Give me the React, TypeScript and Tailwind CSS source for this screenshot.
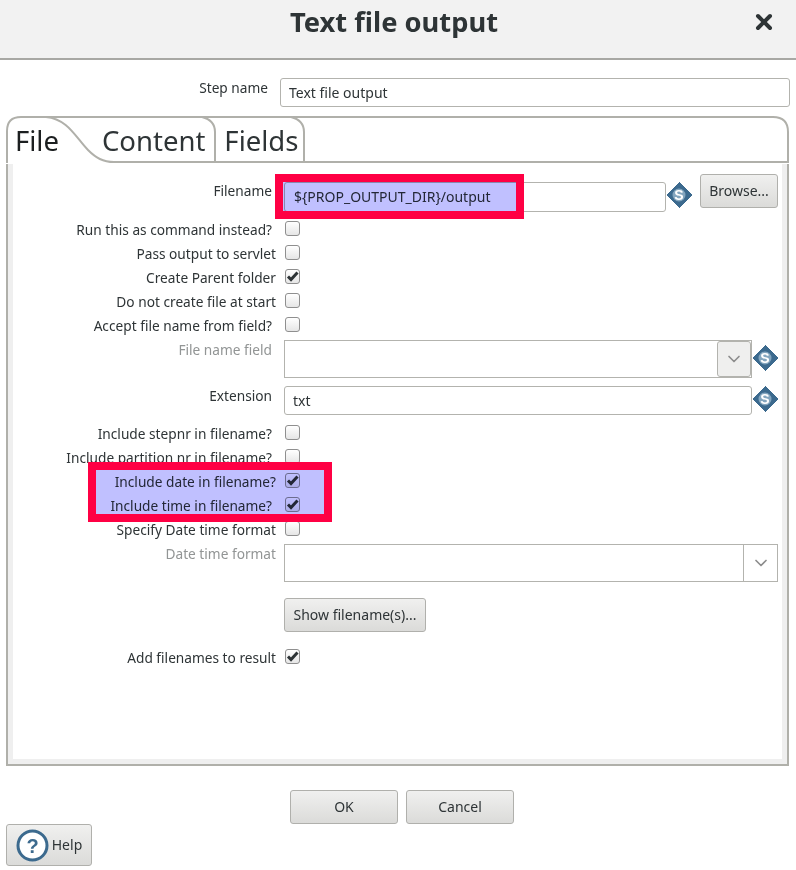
import type { ReactNode } from 'react';
import { ChevronDown, X } from 'lucide-react';

const FONT = 'font-["Noto_Sans",sans-serif]';

function VarIcon() {
  return (
    <svg width="26" height="26" viewBox="0 0 26 26" className="shrink-0">
      <path d="M13 0 L26 13 L13 26 L0 13 Z" fill="#3c6a8e" shapeRendering="crispEdges" />
      <circle cx="13" cy="13" r="6.5" fill="#84a6bf" />
      <text x="13" y="18" textAnchor="middle" fontSize="14" fontWeight="700" fill="#fff" fontFamily="Liberation Sans">
        S
      </text>
    </svg>
  );
}

function HelpIcon() {
  return (
    <svg width="33" height="33" viewBox="0 0 33 33" className="shrink-0">
      <circle cx="16.5" cy="16.5" r="14.5" fill="#fff" stroke="#3c6a8e" strokeWidth="3" />
      <text x="16.5" y="23.5" textAnchor="middle" fontSize="20" fontWeight="700" fill="#3c6a8e" fontFamily="Liberation Sans">
        ?
      </text>
    </svg>
  );
}

function Checkbox({ checked }: { checked?: boolean }) {
  return (
    <span className="ml-px flex h-[15px] w-[15px] items-center justify-center rounded-[3px] border border-[#8f8f8f] bg-gradient-to-b from-white to-[#e6e6e6]">
      {checked && (
        <svg width="13" height="13" viewBox="0 0 13 13" fill="none" stroke="#2e3436" strokeWidth="3">
          <path d="M2 6.5 L5 9.5 L11.5 2.5" />
        </svg>
      )}
    </span>
  );
}

function Label({ children, pr = 'pr-2', muted }: { children: ReactNode; pr?: string; muted?: boolean }) {
  return (
    <div className={`w-[271px] shrink-0 text-right text-[13.7px] whitespace-nowrap ${pr} ${muted ? 'text-[#929595]' : 'text-[#2e3436]'}`}>
      {children}
    </div>
  );
}

function CheckRow({ label, checked, pr }: { label: string; checked?: boolean; pr?: string }) {
  return (
    <div className="flex h-6 items-center">
      <Label pr={pr}>
        <span className="block pt-[4px]">{label}</span>
      </Label>
      <Checkbox checked={checked} />
    </div>
  );
}

function Button({ children, className }: { children: ReactNode; className: string }) {
  return (
    <button
      type="button"
      className={`flex items-center justify-center rounded-[3px] border border-[#b0b0ac] bg-gradient-to-b from-[#f0f0ef] to-[#dbdbd9] text-[#2e3436] ${className}`}
    >
      {children}
    </button>
  );
}

function Combo({ width, disabled }: { width: string; disabled?: boolean }) {
  return (
    <div className={`flex h-[38px] justify-end border border-[#b3b3ae] bg-white ${width}`}>
      <span
        className={`flex w-[34px] items-center justify-center ${
          disabled ? 'rounded-[3px] border border-[#b3b3ae] bg-[#efefee]' : 'border-l border-[#b3b3ae] bg-white'
        }`}
      >
        <ChevronDown size={20} className="text-[#8c8c8c]" />
      </span>
    </div>
  );
}

function TabOutline() {
  return (
    <svg width="783" height="48" viewBox="0 0 783 48" className="absolute top-0 left-0" fill="none" stroke="#b0b0aa" strokeWidth="2">
      <path d="M1 47 L1 15 Q1 1 15 1 L767 1 Q782 1 782 16 L782 47" />
      <path d="M40 1 C62 3 70 22 82 34 C90 42 97 46 108 46 L782 46" />
      <path d="M196 1 C204 3 209 8 209 16 L209 46" />
      <path d="M285 1 C293 3 298 8 298 16 L298 46" />
    </svg>
  );
}

export default function App() {
  return (
    <div className={`relative h-[870px] w-[796px] overflow-hidden bg-white text-[14px] leading-5 ${FONT}`}>
      {/* Title bar */}
      <div className="relative flex h-[60px] items-center justify-center border-b-2 border-[#a8a8a4] bg-[#f2f2f2] pr-[8px] pb-[14px]">
        <h1 className="text-[27.3px] font-bold text-[#2e3436]">Text file output</h1>
        <X size={24} strokeWidth={4} className="absolute top-[10px] right-[20px] text-[#2e3436]" />
      </div>

      {/* Step name */}
      <div className="mt-[18px] flex h-[29px] pr-[6px]">
        <div className="w-[268px] text-right text-[13.7px] text-[#2e3436]">Step name</div>
        <input
          readOnly
          value="Text file output"
          className="ml-3 h-[29px] flex-1 rounded-[3px] border border-[#b3b3ae] px-2 text-[#2e3436] outline-none"
        />
      </div>

      {/* Tab folder */}
      <div className="mt-[9px] ml-[6px] h-[650px] w-[783px]">
        <div className="relative h-[48px]">
          <TabOutline />
          <div className="relative flex h-[46px] items-center pt-[3px] text-[27.5px]">
            <span className="ml-[9px] text-[#1c1f20]">File</span>
            <span className="ml-[43px] text-[#2e3436]">Content</span>
            <span className="ml-[19px] text-[#2e3436]">Fields</span>
          </div>
        </div>

        <div className="h-[602px] border-x-2 border-b-2 border-[#b0b0aa] bg-[#efefef] px-[5px] pb-[5px]">
          <div className="h-full bg-white pt-[10px]">
            {/* Filename */}
            <div className="flex h-[38px]">
              <Label pr="pr-3">
                <span className="mt-[7px] block">Filename</span>
              </Label>
              <div className="mt-2 h-[30px] w-[382px] rounded-[3px] border border-[#b3b3ae] px-[9px] leading-[28px] text-[#2e3436]">
                {'${PROP_OUTPUT_DIR}/output'}
              </div>
              <div className="mt-2">
                <VarIcon />
              </div>
              <Button className="ml-[8px] h-[34px] w-[78px]">Browse...</Button>
            </div>

            <div className="mt-1">
              <CheckRow label="Run this as command instead?" pr="pr-3" />
              <CheckRow label="Pass output to servlet" />
              <CheckRow label="Create Parent folder" checked />
              <CheckRow label="Do not create file at start" />
              <CheckRow label="Accept file name from field?" pr="pr-3" />
            </div>

            {/* File name field */}
            <div className="mt-1 flex">
              <Label muted pr="pr-3">File name field</Label>
              <Combo width="w-[468px]" disabled />
              <div className="mt-[5px]">
                <VarIcon />
              </div>
            </div>

            {/* Extension */}
            <div className="mt-2 flex h-[29px]">
              <Label pr="pr-3">Extension</Label>
              <div className="h-[29px] w-[468px] rounded-[3px] border border-[#b3b3ae] px-2 leading-[27px] text-[#2e3436]">txt</div>
              <VarIcon />
            </div>

            <div className="mt-[5px]">
              <CheckRow label="Include stepnr in filename?" pr="pr-3" />
              <CheckRow label="Include partition nr in filename?" pr="pr-3" />
              <CheckRow label="Include date in filename?" checked />
              <CheckRow label="Include time in filename?" checked pr="pr-3" />
              <CheckRow label="Specify Date time format" />
            </div>

            {/* Date time format */}
            <div className="mt-1 flex">
              <Label muted>Date time format</Label>
              <Combo width="w-[494px]" />
            </div>

            <div className="mt-4 flex">
              <div className="w-[271px] shrink-0" />
              <Button className="h-[34px] w-[142px]">Show filename(s)...</Button>
            </div>

            <div className="mt-3">
              <CheckRow label="Add filenames to result" checked />
            </div>
          </div>
        </div>
      </div>

      {/* Dialog buttons */}
      <div className="mt-6 flex justify-center gap-2 pl-[8px]">
        <Button className="h-[34px] w-[108px]">OK</Button>
        <Button className="h-[34px] w-[108px]">Cancel</Button>
      </div>
      <Button className="ml-[6px] h-[42px] w-[86px] gap-[3px]">
        <HelpIcon />
        Help
      </Button>

      {/* Annotation highlights */}
      <div className="absolute top-[182px] left-[283px] h-[29px] w-[233px] bg-[#c0c0ff] mix-blend-multiply" />
      <div className="absolute top-[174px] left-[275px] h-[45px] w-[249px] border-8 border-[#ff0044]" />
      <div className="absolute top-[470px] left-[96px] h-[45px] w-[229px] bg-[#c0c0ff] mix-blend-multiply" />
      <div className="absolute top-[462px] left-[88px] h-[60px] w-[244px] border-8 border-[#ff0044]" />
    </div>
  );
}
